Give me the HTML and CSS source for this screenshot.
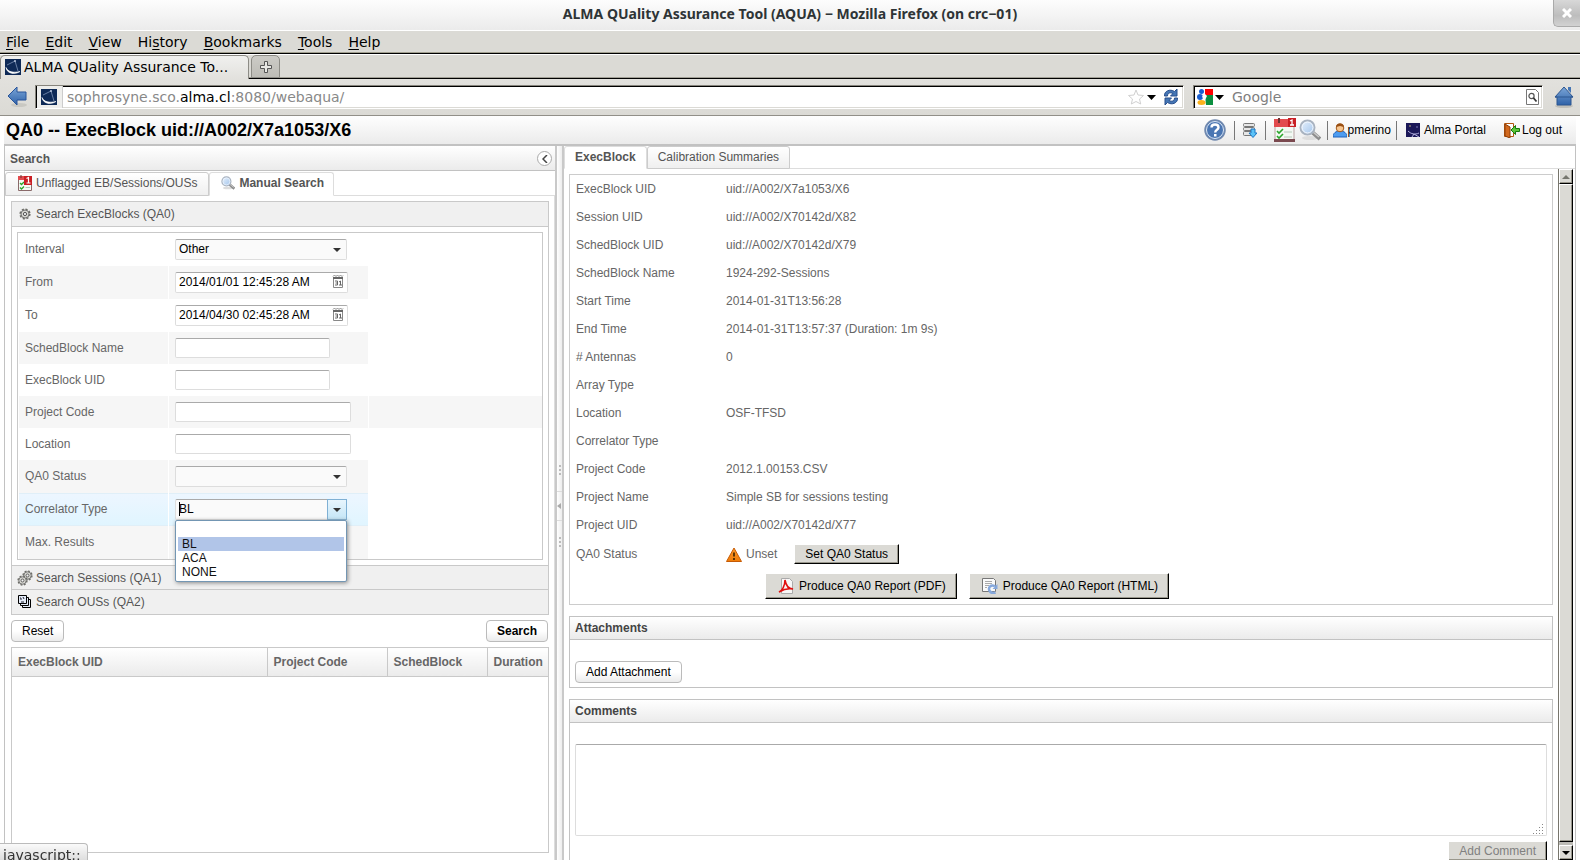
FILE: index.html
```html
<!DOCTYPE html>
<html lang="en">
<head>
<meta charset="utf-8">
<title>ALMA QUality Assurance Tool (AQUA)</title>
<link rel="stylesheet" href="styles.css">
</head>
<body>
<svg class="defs" width="0" height="0" aria-hidden="true">
  <defs>
    <linearGradient id="blue" x1="0" y1="0" x2="0" y2="1"><stop offset="0" stop-color="#7ba6d8"/><stop offset="1" stop-color="#2f62a8"/></linearGradient>
    <linearGradient id="orange" x1="0" y1="0" x2="0" y2="1"><stop offset="0" stop-color="#fb9a2c"/><stop offset="1" stop-color="#f07c08"/></linearGradient>
    <linearGradient id="lens" x1="0" y1="0" x2="1" y2="1"><stop offset="0" stop-color="#eaf3fd"/><stop offset="1" stop-color="#9fc2ea"/></linearGradient>
  </defs>
  <symbol id="i-alma" viewBox="0 0 16 16"><rect width="16" height="16" fill="#0e2a57"/><path d="M1 8.500c2 4.500 7 5.500 14 4-5 3.500-13 2.500-14-4z" fill="#fff" stroke="#fff" stroke-width=".6"/><path d="M2 6l8-4 3 10" fill="none" stroke="#8fa3c4" stroke-width=".7"/><circle cx="10" cy="2" r="1" fill="#b9c6dc"/></symbol>
  <symbol id="i-cal" viewBox="0 0 22 24"><rect x="1" y="2" width="19" height="21" fill="#f3f8f3" stroke="#b9a3a3"/><rect x="0" y="1" width="21" height="8" fill="#e24b4e"/><rect x="0" y="21" width="21" height="3" fill="#7b4a50"/><path d="M5 0v5M16 0v3" stroke="#6d3434" stroke-width="2"/><path d="M3 13l2 2 4-4M3 18l2 2 4-4" fill="none" stroke="#2ba52b" stroke-width="1.600"/><path d="M10 14h8M10 19h8" stroke="#b4c9b8"/><rect x="14" y="0" width="8" height="9" fill="#c91f24"/><path d="M16 3l2-1v5M16 7h4" fill="none" stroke="#fff" stroke-width="1.300"/></symbol>
  <symbol id="i-cal-small" viewBox="0 0 14 16"><path d="M.5 2v13.500h13V2" fill="#f6faf6" stroke="#8a6a6a"/><path d="M0 1h14v4H0z" fill="#e24b4e"/><path d="M3 0v3" stroke="#6d3434"/><path d="M2 8l1.500 1.500L6 7M2 12.500L3.500 14 6 11.500" fill="none" stroke="#2ba52b" stroke-width="1.300"/><path d="M7.500 12.500H12" stroke="#b4c9b8"/><path d="M6 1h8v9H6z" fill="#c91f24"/><path d="M8.500 3.500l2-1V8M8.500 8h4" fill="none" stroke="#fff" stroke-width="1.200"/></symbol>
  <symbol id="i-lens" viewBox="0 0 22 22"><ellipse cx="11" cy="19" rx="8" ry="2" fill="#ddd"/><path d="M13 13l8 7" stroke="#8c8c8c" stroke-width="4"/><path d="M14 13l6 5" stroke="#c9c9c9" stroke-width="1.500"/><circle cx="8.500" cy="8.500" r="7" fill="url(#lens)" stroke="#a9b3c0" stroke-width="2"/><circle cx="8.500" cy="8.500" r="5.500" fill="none" stroke="#f5f9ff"/></symbol>
  <symbol id="i-gear" viewBox="0 0 12 12"><circle cx="6" cy="6" r="4.600" fill="#ccccc6" stroke="#6c6c66" stroke-width="2" stroke-dasharray="2 1.600"/><circle cx="6" cy="6" r="4" fill="#d6d6d0" stroke="#777"/><circle cx="6" cy="6" r="1.600" fill="#f4f4f4" stroke="#555"/></symbol>
  <symbol id="i-date" viewBox="0 0 12 15"><path d="M1.500 4v9.500h9V4" fill="#fff" stroke="#888"/><path d="M1 4h10" stroke="#666" stroke-width="2"/><path d="M1 2.500L2.500 1 4 2.500 5.500 1 7 2.500 8.500 1 10 2.500l1-1" fill="none" stroke="#888"/><path d="M3 7h2.500v4H3M3.500 9h2M7 8l1.500-1v4M7 11h3" fill="none" stroke="#666"/></symbol>
  <symbol id="i-down" viewBox="0 0 8 4"><path d="M0 0h8L4 4z" fill="currentColor"/></symbol>
</svg>

<header class="titlebar">
  <h1 class="window-title">ALMA QUality Assurance Tool (AQUA) − Mozilla Firefox (on crc−01)</h1>
  <button class="window-close" aria-label="Close window"><svg width="10" height="10" viewBox="0 0 10 10"><path d="M1 1l8 8M9 1l-8 8" stroke="#fff" stroke-width="3"/></svg></button>
</header>
<nav class="menubar" aria-label="Application menu">
  <button><u>F</u>ile</button><button><u>E</u>dit</button><button><u>V</u>iew</button><button>Hi<u>s</u>tory</button><button><u>B</u>ookmarks</button><button><u>T</u>ools</button><button><u>H</u>elp</button>
</nav>
<div class="tabstrip">
  <button class="browser-tab"><svg width="16" height="16"><use href="#i-alma"/></svg>ALMA QUality Assurance To...</button>
  <button class="new-tab" aria-label="New tab"><svg width="12" height="12" viewBox="0 0 12 12"><path d="M4.500.5h3v4h4v3h-4v4h-3v-4h-4v-3h4z" fill="#e8e8e4" stroke="#555"/></svg></button>
</div>
<div class="navbar">
  <button class="plain" aria-label="Back"><svg width="20" height="22" viewBox="0 0 20 22"><ellipse cx="12" cy="19" rx="8" ry="2" fill="#c9c8c2"/><path d="M1 10L10 1v5h9v8h-9v5z" fill="url(#blue)" stroke="#28549a"/></svg></button>
  <div class="urlbox">
    <span class="identity"><svg width="16" height="16"><use href="#i-alma"/></svg></span>
    <span class="url">sophrosyne.sco.<b>alma.cl</b>:8080/webaqua/</span>
    <button class="plain" aria-label="Bookmark this page"><svg width="16" height="16" viewBox="0 0 16 16"><path d="M8 1l2 5 5.500.5-4 3.500 1.200 5L8 12.500 3.300 15l1.200-5-4-3.500L6 6z" fill="#fff" stroke="#d0d0d0"/></svg></button>
    <button class="plain" aria-label="History list"><svg width="9" height="5" viewBox="0 0 9 5"><path d="M0 0h9L4.500 5z"/></svg></button>
    <button class="plain reload" aria-label="Reload"><svg width="16" height="18" viewBox="0 0 16 18"><path d="M1.500 8C1 3 7 .5 11.500 3.500L14 1v7H7.500L10 5.500C7 4 4.500 5 4.500 8z" fill="#4576b5" stroke="#284e8c"/><path d="M14.500 10c.5 5-5.500 7.500-10 4.500L2 17v-7h6.500L6 12.500c3 1.500 5.500.5 5.500-2.500z" fill="#4576b5" stroke="#284e8c"/></svg></button>
  </div>
  <div class="searchbox">
    <svg width="16" height="16" viewBox="0 0 16 16"><path d="M8 0h8v6H8z" fill="#f00"/><path d="M8 6h8v10H9z" fill="#0b8f3f"/><circle cx="4.500" cy="2.500" r="2.500" fill="#1a5fd0"/><circle cx="3" cy="8" r="3" fill="#1a5fd0"/><ellipse cx="4.500" cy="13.500" rx="4" ry="2.500" fill="#fbb21c"/><path d="M7 4l3 3-2 4-3-3z" fill="#fff"/></svg>
    <svg width="9" height="5" viewBox="0 0 9 5"><path d="M0 0h9L4.500 5z"/></svg>
    <input type="text" placeholder="Google" aria-label="Web search">
    <button class="plain" aria-label="Search the web"><svg width="13" height="16" viewBox="0 0 13 16"><path d="M.5.5h9l3 3v12H.5z" fill="#fff" stroke="#777"/><circle cx="5.500" cy="7" r="2.600" fill="#fff" stroke="#555" stroke-width="1.200"/><path d="M7.500 9l3 3.500" stroke="#333" stroke-width="1.800"/></svg></button>
  </div>
  <button class="plain home" aria-label="Home"><svg width="20" height="22" viewBox="0 0 20 22"><ellipse cx="10" cy="20" rx="9" ry="2" fill="#c0bfb9"/><path d="M10 1l9 10h-2v8H3v-8H1z" fill="url(#blue)" stroke="#2d5690"/><path d="M14 1h3v6l-3-3z" fill="#4676b4"/><path d="M1 11h18" stroke="#2d5690"/></svg></button>
</div>

<main class="page">
  <div class="app-header">
    <h2>QA0 -- ExecBlock uid://A002/X7a1053/X6</h2>
    <div class="tools">
      <button class="plain tool-help" aria-label="Help"><svg width="22" height="22" viewBox="0 0 22 22"><circle cx="11" cy="11" r="10" fill="#4a76b3" stroke="#7189ae" stroke-width="1.500"/><circle cx="11" cy="11" r="8.500" fill="none" stroke="#dfe8f4"/><path d="M7.500 8.500c0-4 7-4 7 0 0 2.500-3.300 2-3.300 5" fill="none" stroke="#fff" stroke-width="2.400"/><rect x="10" y="15" width="2.500" height="2.500" fill="#fff"/></svg></button>
      <button class="plain tool-db" aria-label="Download"><svg width="14" height="16" viewBox="0 0 14 16"><rect x=".5" y="1.500" width="11" height="3" rx="1" fill="#e6e6e6" stroke="#777"/><rect x=".5" y="5.500" width="11" height="3" rx="1" fill="#e6e6e6" stroke="#777"/><rect x=".5" y="9.500" width="9" height="4" rx="1" fill="#e6e6e6" stroke="#777"/><path d="M8 7h4v4h2l-4 4.500L6 11h2z" fill="#5cc3f7" stroke="#1c77c4"/></svg></button>
      <span class="tool-pair"><button class="plain" aria-label="Unflagged list"><svg width="22" height="24"><use href="#i-cal"/></svg></button><button class="plain" aria-label="Manual search"><svg width="22" height="22"><use href="#i-lens"/></svg></button></span>
      <a class="tool-user" href="#user"><svg width="14" height="15" viewBox="0 0 14 15"><path d="M0 14c0-4 3-6 7-6s7 2 7 6z" fill="#4d9cf0" stroke="#1e63bd"/><circle cx="7" cy="5" r="3.800" fill="#f7c690" stroke="#a35a1b"/><path d="M3 4c0-5 8-5 8 0L7 3z" fill="#9a4f12"/></svg>pmerino</a>
      <a class="tool-portal" href="#portal"><svg width="14" height="14" viewBox="0 0 14 14"><rect width="14" height="14" fill="#1b1858"/><path d="M2 8c3 3 7 4 11 2M6 14l2-3 5 3" fill="none" stroke="#b3b1e0"/><circle cx="4" cy="3" r=".8" fill="#d9c98a"/><circle cx="11" cy="4" r=".8" fill="#8a87c9"/></svg>Alma Portal</a>
      <a class="tool-exit" href="#logout"><svg width="16" height="15" viewBox="0 0 16 15"><path d="M.5.500h9v13h-9z" fill="#fff" stroke="#b3540d"/><path d="M1 1l5 3v11l-5-2z" fill="#d2691e" stroke="#8c3f08"/><path d="M15.500 5.500h-4v-3L7 7l4.500 4.500v-3h4z" fill="#5cc63a" stroke="#167a0c"/></svg>Log out</a>
    </div>
  </div>

  <div class="split">
    <section class="side" aria-label="Search">
      <div class="side-title"><h3>Search</h3><button class="collapse" aria-label="Collapse"><svg width="6" height="8" viewBox="0 0 6 8"><path d="M5 0L1 4l4 4" fill="none" stroke="#444" stroke-width="1.500"/></svg></button></div>
      <div class="tabs side-tabs">
        <button class="tab"><svg width="14" height="16"><use href="#i-cal-small"/></svg>Unflagged EB/Sessions/OUSs</button>
        <button class="tab current"><svg width="14" height="14"><use href="#i-lens"/></svg>Manual Search</button>
      </div>
      <div class="side-body">
        <div class="accordion">
          <button class="acc-head"><svg width="16" height="12"><use href="#i-gear"/></svg>Search ExecBlocks (QA0)</button>
          <div class="acc-body">
            <form class="form" id="query">
              <div class="row"><label for="interval">Interval</label><div class="cell"><span class="pick"><select id="interval"><option>Other</option></select><svg width="8" height="4"><use href="#i-down"/></svg></span></div></div>
              <div class="row odd"><label for="from">From</label><div class="cell"><span class="pick date"><input id="from" type="text" value="2014/01/01 12:45:28 AM"><svg width="12" height="15"><use href="#i-date"/></svg></span></div></div>
              <div class="row"><label for="to">To</label><div class="cell"><span class="pick date"><input id="to" type="text" value="2014/04/30 02:45:28 AM"><svg width="12" height="15"><use href="#i-date"/></svg></span></div></div>
              <div class="row odd"><label for="sbname">SchedBlock Name</label><div class="cell"><input class="text" id="sbname" type="text"></div></div>
              <div class="row"><label for="ebuid">ExecBlock UID</label><div class="cell"><input class="text" id="ebuid" type="text"></div></div>
              <div class="row odd full"><label for="pcode">Project Code</label><div class="cell"><input class="text wide" id="pcode" type="text"></div><div class="rest"></div></div>
              <div class="row"><label for="loc">Location</label><div class="cell"><input class="text wide" id="loc" type="text"></div></div>
              <div class="row odd"><label for="qa0">QA0 Status</label><div class="cell"><span class="pick"><select id="qa0"><option></option></select><svg width="8" height="4"><use href="#i-down"/></svg></span></div></div>
              <div class="row active"><label for="corr">Correlator Type</label><div class="cell"><span class="pick open"><input id="corr" type="text" role="combobox" aria-expanded="true" aria-controls="corr-list" value="BL"><span class="caret"></span><button type="button" class="trigger" aria-label="Show options"><svg width="8" height="4"><use href="#i-down"/></svg></button>
                <ul class="options" id="corr-list" role="listbox"><li role="option">&nbsp;</li><li role="option" aria-selected="true">BL</li><li role="option">ACA</li><li role="option">NONE</li></ul></span></div></div>
              <div class="row odd"><label for="max">Max. Results</label><div class="cell"><span class="pick"><select id="max"><option></option></select><svg width="8" height="4"><use href="#i-down"/></svg></span></div></div>
            </form>
          </div>
          <button class="acc-head"><svg width="16" height="16" viewBox="0 0 16 16"><use href="#i-gear" x="5" y="0" width="11" height="11"/><use href="#i-gear" x="0" y="5" width="11" height="11"/></svg>Search Sessions (QA1)</button>
          <button class="acc-head"><svg width="16" height="14" viewBox="0 0 16 14"><g fill="#e3ebf8" stroke="#000"><path d="M5.500 4.500h8v8h-8z"/><path d="M3.500 2.500h8v8h-8z"/><path d="M1.500.5h8v8h-8z"/></g><path d="M3 3h1v2M6 2l1 2M4 7h3" stroke="#223" fill="none"/></svg>Search OUSs (QA2)</button>
        </div>
        <div class="actions"><button class="btn" type="reset" form="query">Reset</button><button class="btn strong" type="submit" form="query">Search</button></div>
        <div class="results">
          <table><colgroup><col><col class="c-code"><col class="c-sched"><col class="c-dur"></colgroup><thead><tr><th>ExecBlock UID</th><th>Project Code</th><th>SchedBlock</th><th>Duration</th></tr></thead></table>
        </div>
      </div>
    </section>

    <div class="splitter">
      <i class="grip"></i>
      <button class="split-toggle" aria-label="Toggle side panel"><svg width="4" height="6" viewBox="0 0 4 6"><path d="M4 0v6L0 3z" fill="#aaa"/></svg></button>
      <i class="grip"></i>
    </div>

    <section class="detail" aria-label="ExecBlock">
      <div class="tabs">
        <button class="tab current">ExecBlock</button>
        <button class="tab">Calibration Summaries</button>
      </div>
      <div class="detail-body">
        <div class="scroll">
          <div class="box facts">
            <dl>
              <dt>ExecBlock UID</dt><dd>uid://A002/X7a1053/X6</dd>
              <dt>Session UID</dt><dd>uid://A002/X70142d/X82</dd>
              <dt>SchedBlock UID</dt><dd>uid://A002/X70142d/X79</dd>
              <dt>SchedBlock Name</dt><dd>1924-292-Sessions</dd>
              <dt>Start Time</dt><dd>2014-01-31T13:56:28</dd>
              <dt>End Time</dt><dd>2014-01-31T13:57:37 (Duration: 1m 9s)</dd>
              <dt># Antennas</dt><dd>0</dd>
              <dt>Array Type</dt><dd></dd>
              <dt>Location</dt><dd>OSF-TFSD</dd>
              <dt>Correlator Type</dt><dd></dd>
              <dt>Project Code</dt><dd>2012.1.00153.CSV</dd>
              <dt>Project Name</dt><dd>Simple SB for sessions testing</dd>
              <dt>Project UID</dt><dd>uid://A002/X70142d/X77</dd>
              <dt class="last">QA0 Status</dt><dd class="status last"><svg width="16" height="15" viewBox="0 0 16 15"><path d="M8 1l7.500 13.500H.5z" fill="url(#orange)" stroke="#c65a04" stroke-linejoin="round"/><path d="M8 5.500v4M8 11v2" stroke="#3a2000" stroke-width="1.600"/></svg>Unset<button class="raised small">Set QA0 Status</button></dd>
            </dl>
            <div class="reports">
              <button class="raised"><svg width="16" height="16" viewBox="0 0 16 16"><path d="M3.500.5h8l3 3v12h-11z" fill="#f7f7f7" stroke="#aaa"/><path d="M1 14c3-1 6-6 6-12 1 6 3 9 8 9-5-1-9 0-14 3z" fill="none" stroke="#e01010" stroke-width="1.600"/></svg>Produce QA0 Report (PDF)</button>
              <button class="raised"><svg width="16" height="16" viewBox="0 0 16 16"><path d="M.5.5h11l2 2v11H.5z" fill="#fafafa" stroke="#777"/><path d="M3 3.500h7M3 5.500h7M3 7.500h4M3 9.500h2" stroke="#aaa"/><path d="M13.500 14.500c-5 2-8-3-5.500-6 1.500-1.500 4-1.500 5 0" fill="none" stroke="#86a8dc" stroke-width="2.500"/><path d="M15.500 6v5h-5z" fill="#86a8dc"/></svg>Produce QA0 Report (HTML)</button>
            </div>
          </div>
          <section class="box"><h3 class="box-title">Attachments</h3><div class="box-body attach"><button class="btn">Add Attachment</button></div></section>
          <section class="box"><h3 class="box-title">Comments</h3><div class="box-body comment"><span class="area"><textarea aria-label="Comment"></textarea><svg class="resize" width="11" height="11" viewBox="0 0 11 11"><path d="M0 10.500h11M3 7.500h8M6 4.500h5M9 1.500h2" stroke="#888" stroke-dasharray="1 2" /></svg></span><button class="raised small" disabled>Add Comment</button></div></section>
        </div>
        <div class="scrollbar" aria-hidden="true">
          <div class="arrow off"><svg width="8" height="4" viewBox="0 0 8 4"><path d="M0 4h8L4 0z" fill="#77776f"/></svg></div>
          <div class="thumb"></div>
          <div class="arrow"><svg width="8" height="4"><use href="#i-down"/></svg></div>
        </div>
      </div>
    </section>
  </div>
</main>
<div class="statustip">javascript:;</div>
</body>
</html>
```

FILE: styles.css
```css
* { box-sizing: border-box; }
html, body { height: 100%; }
body {
  margin: 0;
  display: flex;
  flex-direction: column;
  overflow: hidden;
  background: #fff;
  font: 12px/16px "Liberation Sans", Arial, sans-serif;
  color: #666;
}
h1, h2, h3, ul, dl, dd { margin: 0; padding: 0; }
button, input, select, textarea { font: inherit; color: #000; margin: 0; }
button { padding: 0; border: 0; background: none; }
svg { display: block; flex: none; }
a { color: #000; text-decoration: none; }
.defs { position: absolute; }
.plain { display: flex; align-items: center; color: #000; }

/* browser window */
.titlebar {
  position: relative;
  flex: none;
  height: 31px;
  display: flex;
  align-items: center;
  justify-content: center;
  padding-bottom: 2px;
  background: linear-gradient(#fdfdfd, #ebebeb);
  border-bottom: 1px solid #fff;
}
.window-title { font: bold 14px/20px "Noto Sans", "Open Sans", sans-serif; color: #2e3436; }
.window-close {
  position: absolute;
  top: 0;
  right: 0;
  width: 27px;
  height: 27px;
  display: flex;
  align-items: center;
  justify-content: center;
  background: linear-gradient(#d8d8d8, #bdbdbd 60%, #d2d2d2);
  border: 1px solid #aaa;
  border-width: 0 0 1px 1px;
  border-bottom-left-radius: 5px;
}
.menubar, .tabstrip, .navbar, .statustip { font-family: "DejaVu Sans", sans-serif; font-size: 14px; }
.menubar {
  flex: none;
  height: 23px;
  display: flex;
  align-items: center;
  gap: 16px;
  padding: 0 6px;
  background: #dbdad5;
  border-bottom: 1px solid #000;
  box-shadow: inset 0 -1px #a19f8f;
}
.menubar u { text-underline-offset: 2px; }
.tabstrip {
  flex: none;
  height: 25px;
  display: flex;
  gap: 2px;
  border-top: 1px solid #fff;
  background: linear-gradient(#dbdad5 22px, #a19f95 22px, #a19f95 23px, #000 23px);
}
.browser-tab {
  width: 249px;
  display: flex;
  align-items: center;
  gap: 3px;
  padding: 0 4px 2px;
  white-space: nowrap;
  background: linear-gradient(#f0f0ee, #e2e1dd);
  border: 1px solid #8d8c86;
  border-bottom: 0;
  border-radius: 5px 5px 0 0;
}
.new-tab {
  width: 29px;
  margin-bottom: 1px;
  display: flex;
  align-items: center;
  justify-content: center;
  background: linear-gradient(#cccbc6, #bdbcb6);
  border: 1px solid #8d8c86;
  border-radius: 5px 5px 0 0;
}
.navbar {
  flex: none;
  height: 37px;
  display: flex;
  align-items: center;
  padding: 0 6px 0 7px;
  background: linear-gradient(#e2e1dd, #dbdad5);
  border-bottom: 1px solid #918f88;
}
.urlbox, .searchbox {
  height: 24px;
  display: flex;
  align-items: center;
  background: #fff;
  border: 1px solid;
  border-color: #86847c #fff #fff #86847c;
  box-shadow: inset 1px 1px #000, inset -1px -1px #dbdad5;
}
.urlbox { flex: 1; margin: 0 9px 0 8px; padding: 0 4px 0 1px; }
.searchbox { width: 350px; padding: 0 3px; gap: 2px; color: #000; }
.identity {
  align-self: stretch;
  display: flex;
  align-items: center;
  padding: 0 5px 0 4px;
  background: #eeeeec;
  border-right: 1px solid #ccc;
}
.url { flex: 1; padding-left: 4px; color: #888; }
.url b { font-weight: normal; color: #000; }
.urlbox .plain { margin-left: 3px; }
.urlbox .reload { margin-left: 7px; }
.searchbox input {
  flex: 1;
  min-width: 0;
  padding: 0 0 0 6px;
  border: 0;
  background: none;
  outline: 0;
}
.searchbox input::placeholder { color: #808080; opacity: 1; }
.home { margin-left: 11px; }

/* application */
.page {
  flex: 1;
  min-height: 0;
  display: flex;
  flex-direction: column;
  padding: 0 4px;
}
.app-header {
  flex: none;
  height: 30px;
  display: flex;
  align-items: center;
  justify-content: space-between;
  padding: 0 14px 0 2px;
  background: linear-gradient(#fefefe, #ebebeb);
  border-bottom: 2px solid #c2c2c2;
}
.app-header h2 { font-size: 18px; line-height: 24px; color: #000; }
.tools { display: flex; align-items: center; }
.tools a { display: flex; align-items: center; gap: 4px; }
.tool-help, .tool-db, .tool-pair, .tools .tool-user { height: 19px; border-right: 1px solid #777; }
.tool-help { padding-right: 8px; }
.tool-db { padding: 0 8px; }
.tool-pair { display: flex; align-items: center; gap: 3px; padding: 0 6px 0 8px; }
.tools .tool-user { gap: 1px; padding: 0 5px; }
.tools .tool-portal { padding: 0 18px 0 9px; }
.tools .tool-exit { gap: 2px; }
.split { flex: 1; min-height: 0; display: flex; }
.side {
  flex: 0 0 551px;
  display: flex;
  flex-direction: column;
  border-left: 1px solid #c2c2c2;
}
.side-title {
  flex: none;
  height: 25px;
  display: flex;
  align-items: center;
  justify-content: space-between;
  padding: 1px 3px 0 5px;
  background: linear-gradient(#fff, #ebebeb);
  border-bottom: 1px solid #c2c2c2;
}
.side-title h3 { font-size: 12px; color: #555; }
.collapse {
  width: 15px;
  height: 15px;
  display: flex;
  align-items: center;
  justify-content: center;
  border: 1px solid #aaa;
  border-radius: 50%;
  background: #fff;
}
.tabs {
  flex: none;
  height: 23px;
  display: flex;
  box-shadow: inset 0 -1px #ddd;
}
.side-tabs { height: 25px; padding-top: 1px; }
.tab {
  display: flex;
  align-items: center;
  gap: 4px;
  padding: 0 11px 3px 12px;
  color: #555;
  background: linear-gradient(#fff, #efefef);
  border: 1px solid #ccc;
  border-radius: 3px 3px 0 0;
}
.tab.current {
  padding: 0 9px 3px 11px;
  font-weight: bold;
  background: #fff;
  border-color: #ddd;
  border-bottom-color: #fff;
}
.detail .tab { padding: 0 10px 2px; }
.side-body {
  flex: 1;
  min-height: 0;
  display: flex;
  flex-direction: column;
  gap: 5px;
  padding: 5px 5px 7px 6px;
  border-right: 1px solid #ddd;
}
.accordion { flex: none; border: 1px solid #c9c9c9; }
.acc-head {
  width: 100%;
  height: 24px;
  display: flex;
  align-items: center;
  gap: 3px;
  padding-left: 5px;
  color: #555;
  background: #f0f0f0;
}
.acc-body + .acc-head { height: 23px; }
.acc-head + .acc-head { border-top: 1px solid #c9c9c9; height: 25px; }
.acc-body { padding: 5px; border: 1px solid #c9c9c9; border-width: 1px 0; }
.form { border: 1px solid #c9c9c9; padding: 0 0 0 1px; }
.row { display: grid; grid-template-columns: 149px 199px 1fr; gap: 1px; }
.row label { padding: 0 0 1px 6px; display: flex; align-items: center; }
.cell { padding: 6px; }
.odd label, .odd .cell, .rest { background: #f6f6f6; }
.active label, .active .cell {
  background: linear-gradient(#edf6ff, #e0f5ff);
  box-shadow: inset 0 1px #e0eff8, inset 0 -1px #e0eff8;
}
.pick { position: relative; display: block; width: 172px; height: 21px; }
.pick select, .pick input, .text, textarea {
  display: block;
  width: 100%;
  height: 100%;
  padding: 0 3px 1px;
  border: 1px solid #ddd;
  border-top-color: #aaa;
  border-radius: 2px;
  background: #fafafa;
  appearance: none;
  outline: 0;
}
.pick > svg { position: absolute; right: 6px; top: 9px; color: #333; }
.pick.date { width: 173px; }
.pick.date input { background: #fff; }
.pick.date > svg { right: 4px; top: 2px; }
.text { width: 155px; height: 20px; background: #fff; }
.text.wide { width: 176px; }
.caret { position: absolute; left: 4px; top: 3px; width: 1px; height: 14px; background: #000; }
.trigger {
  position: absolute;
  right: 0;
  top: 0;
  width: 20px;
  height: 21px;
  display: flex;
  align-items: center;
  justify-content: center;
  color: #333;
  border: 1px solid #7fb0d4;
  background: linear-gradient(#e8f5fd, #c5e6f7);
}
.options {
  position: absolute;
  z-index: 2;
  top: 21px;
  left: 0;
  width: 172px;
  padding: 2px;
  list-style: none;
  line-height: 14px;
  color: #111;
  background: #fff;
  border: 1px solid #7396b3;
  border-radius: 2px;
  box-shadow: 1px 1px 4px #888;
}
.options li { padding: 0 4px; }
.options li[aria-selected] { background: #b1c5e8; }
.actions { flex: none; display: flex; justify-content: space-between; padding-right: 1px; }
.btn {
  height: 22px;
  padding: 0 10px;
  background: linear-gradient(#fff 50%, #ebebeb);
  border: 1px solid #bbb;
  border-radius: 4px;
}
.strong { font-weight: bold; }
.results { flex: 1; min-height: 0; border: 1px solid #c9c9c9; }
.results table { width: 100%; border-collapse: collapse; table-layout: fixed; }
.c-code { width: 120px; }
.c-sched { width: 100px; }
.c-dur { width: 61px; }
.results th {
  height: 28px;
  padding: 0 6px;
  text-align: left;
  background: linear-gradient(#fff, #ebebeb);
  border-bottom: 1px solid #c9c9c9;
}
.results th:last-child { padding-right: 0; }
.results th + th { border-left: 1px solid #c9c9c9; }
.splitter {
  flex: none;
  width: 9px;
  display: flex;
  flex-direction: column;
  align-items: center;
  justify-content: center;
  gap: 16px;
  padding-top: 6px;
  border: 2px solid #c9c9c9;
  border-width: 0 2px;
  background: linear-gradient(90deg, #fff, #ededed);
}
.grip { width: 2px; height: 10px; background: repeating-linear-gradient(#bbb 0 2px, transparent 2px 4px); }
.split-toggle {
  width: 5px;
  height: 30px;
  display: flex;
  align-items: center;
  border: 1px solid #ddd;
  border-width: 1px 0;
}
.detail {
  flex: 1;
  min-width: 0;
  display: flex;
  flex-direction: column;
  border-right: 1px solid #c2c2c2;
}
.detail-body { flex: 1; min-height: 0; display: flex; }
.scroll {
  flex: 1;
  min-width: 0;
  overflow: hidden;
  display: flex;
  flex-direction: column;
  gap: 11px;
  padding: 5px 5px 0;
}
.box { flex: none; border: 1px solid #c2c2c2; }
.facts { border-color: #ccc; padding-bottom: 5px; }
dl { display: grid; grid-template-columns: 150px 1fr; grid-auto-rows: 28px; align-items: center; padding-left: 6px; }
.last { padding-top: 2px; }
.status { display: flex; align-items: center; gap: 4px; }
.status .raised { margin-left: 13px; }
.reports { display: flex; gap: 12px; padding: 6px 0 0 195px; }
.raised {
  height: 26px;
  display: flex;
  align-items: center;
  gap: 5px;
  padding: 0 10px 0 12px;
  background: #dbdad5;
  border: 1px solid;
  border-color: #fff #000 #000 #fff;
  box-shadow: inset -1px -1px #99978c;
}
.raised.small { height: 20px; padding: 0 10px; }
.raised:disabled { color: #808080; }
.box-title {
  height: 23px;
  padding: 0 5px;
  font-size: 12px;
  line-height: 22px;
  color: #444;
  background: linear-gradient(#fff, #ebebeb);
  border-bottom: 1px solid #c2c2c2;
}
.box-body { padding: 21px 5px 4px; }
.comment { display: flex; flex-direction: column; align-items: flex-end; gap: 5px; }
.area { position: relative; width: 100%; height: 92px; }
textarea { background: #fff; resize: none; }
.resize { position: absolute; right: 3px; bottom: 2px; }
.scrollbar {
  flex: none;
  width: 15px;
  margin-right: 2px;
  display: flex;
  flex-direction: column;
  border-left: 1px solid #77756c;
  background: #bdbcb6;
}
.arrow, .thumb {
  background: #dbdad5;
  border: 1px solid;
  border-color: #fff #000 #000 #fff;
  box-shadow: inset -1px -1px #99978c;
}
.arrow { height: 15px; display: flex; align-items: center; justify-content: center; color: #000; }
.thumb { flex: 1; margin-bottom: 3px; }
.statustip {
  position: fixed;
  left: 0;
  bottom: 0;
  width: 88px;
  height: 17px;
  padding-left: 3px;
  line-height: 22px;
  color: #333;
  background: linear-gradient(#fafafa, #dedede);
  border: 1px solid #bbb;
  border-width: 1px 1px 0 0;
  border-top-right-radius: 4px;
}
```
